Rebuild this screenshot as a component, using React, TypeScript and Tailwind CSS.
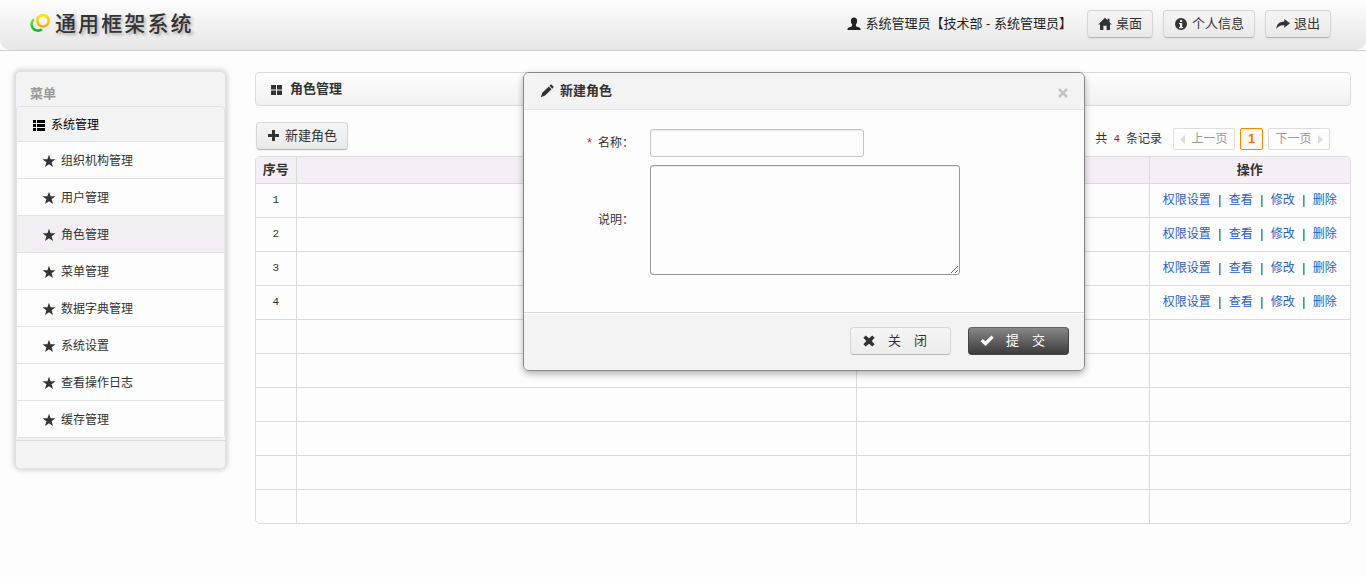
import type { ReactNode } from "react";

const iconShapes = {
  user: <path d="M7 0.5c2 0 3.1 1.3 3.1 3.3 0 1.6-.5 2.9-1.2 3.7v1.1c0 .6.4.9 1 1.1l2.3.9c.9.4 1.3 1 1.4 2.4H.4c.1-1.4.5-2 1.400-2.400l2.300-.9c.6-.2 1-.5 1-1.100V7.500C4.400 6.700 3.900 5.400 3.900 3.800 3.900 1.800 5 .5 7 .5z" />,
  home: <path d="M7 .8 9.500 3.300V1.800h2v3.500L13.800 7.600H12V13H8.600V8.800H5.400V13H2V7.600H.2z" />,
  info: (
    <path
      fillRule="evenodd"
      d="M7 1a6 6 0 1 1 0 12A6 6 0 0 1 7 1zM6 3v2h2.200V3zM5 6v1.200h1V10H5v1.200h4.200V10h-1V6z"
    />
  ),
  share: <path d="M8.300 2 14 6.300 8.300 10.800V8.300C4.500 8 2.300 9.200.3 12c.1-4.300 2.700-7.400 8-7.600z" />,
  list: <path d="M1 2h3v3H1zM5 2h8v3H5zM1 6h3v3H1zM5 6h8v3H5zM1 10h3v3H1zM5 10h8v3H5z" />,
  star: <path d="M7 .8 8.600 5.200 13.500 5.300 9.600 8.200 11 13 7 10.200 3 13 4.400 8.200.5 5.300 5.400 5.200z" />,
  grid: <path d="M1 3h5v4.500H1zM7 3h5v4.500H7zM1 8.500h5V13H1zM7 8.500h5V13H7z" />,
  plus: <path d="M5 1h3v4h4v3H8v4H5V8H1V5h4z" />,
  pencil: <path d="M10.300.9c.5-.4 1-.4 1.500 0l1.500 1.400c.4.5.4 1 0 1.400l-1 1-2.900-2.900zM8.800 2.500l2.800 2.800-6.500 6.200-4.300 1.700 1.500-4.400z" />,
  remove: <path d="M3.700 1.400 7 4.300l3.300-2.900 2.300 2.300L9.700 7l2.900 3.300-2.300 2.300L7 9.700l-3.300 2.900-2.300-2.300L4.300 7 1.400 3.700z" />,
  ok: <path d="M11.500 1.500 13.700 3.700 5.600 11.900.6 7.300 2.700 5.100 5.500 7.300z" />,
};

function Icon({ name }: { name: keyof typeof iconShapes }) {
  return (
    <svg viewBox="0 0 14 14" className="size-3.5 shrink-0 fill-current" aria-hidden="true">
      {iconShapes[name]}
    </svg>
  );
}

function Button({ icon, children }: { icon: keyof typeof iconShapes; children: ReactNode }) {
  return (
    <button
      type="button"
      className="flex h-7 items-center gap-1 rounded-[4px] border border-[#d6d6d6] border-b-[#b5b5b5] bg-linear-to-b from-[#f5f5f5] to-[#e9e9e9] px-2.5 text-[13px] shadow-xs"
    >
      <Icon name={icon} />
      {children}
    </button>
  );
}

const menu = ["组织机构管理", "用户管理", "角色管理", "菜单管理", "数据字典管理", "系统设置", "查看操作日志", "缓存管理"];
const active = "角色管理";
const actions = ["权限设置", "查看", "修改", "删除"];
const rows = [1, 2, 3, 4, null, null, null, null, null, null];

function Header() {
  return (
    <header className="border-b border-[#cfcfcf]">
      <div className="flex h-[50px] items-center justify-between rounded-b-[10px] bg-linear-to-b from-[#fdfdfd] to-[#e6e6e6] pr-[35px] pb-0.5 pl-[29px]">
        <h1 className="flex items-center gap-[5px] text-[21px] leading-7 font-medium tracking-widest text-[#333] [text-shadow:2px_2px_3px_#aaa]">
          <svg viewBox="0 0 21 20" className="h-5 w-[21px]" fill="none" aria-hidden="true">
            <defs>
              <linearGradient id="ring-gold" x1="0" y1="0" x2="0" y2="1">
                <stop stopColor="#ffe800" />
                <stop offset="1" stopColor="#ffa818" />
              </linearGradient>
              <linearGradient id="ring-green" x1="0" y1="0" x2="0" y2="1">
                <stop stopColor="#7ee04a" />
                <stop offset="1" stopColor="#08bd20" />
              </linearGradient>
            </defs>
            <path d="M5 5.200A6 6 0 1 0 12.800 15.300" stroke="url(#ring-green)" strokeWidth="2.600" />
            <circle cx="14" cy="6.800" r="5.700" stroke="url(#ring-gold)" strokeWidth="2.600" />
          </svg>
          通用框架系统
        </h1>
        <div className="flex items-center gap-2.5 text-[13px]">
          <span className="mr-[5px] flex items-center gap-1 text-[#222]">
            <Icon name="user" />
            系统管理员【技术部 - 系统管理员】
          </span>
          <Button icon="home">桌面</Button>
          <Button icon="info">个人信息</Button>
          <Button icon="share">退出</Button>
        </div>
      </div>
    </header>
  );
}

function Sidebar() {
  return (
    <nav className="w-[211px] shrink-0 rounded-[5px] border border-[#e0e0e0] bg-[#f3f3f3] shadow-[0_0_6px_#bbb]">
      <h2 className="h-[34px] pt-3 pl-3.5 text-[13px] leading-5 font-bold text-[#999]">菜单</h2>
      <div className="mb-0.5 rounded-[4px] border border-[#e2e2e2]">
        <div className="flex h-[35px] items-center gap-[5px] border-b border-[#e2e2e2] pt-px pl-[15px] text-black">
          <Icon name="list" />
          系统管理
        </div>
        <ul className="divide-y divide-[#e2e2e2]">
          {menu.map((item) => (
            <li key={item}>
              <a
                href="#"
                aria-current={item === active ? "page" : undefined}
                className={`flex h-9 items-center gap-[5px] pt-px pl-[25px] ${item === active ? "bg-[#f3edf4]" : "bg-[#fdfdfd]"}`}
              >
                <Icon name="star" />
                {item}
              </a>
            </li>
          ))}
        </ul>
      </div>
      <div className="h-7 border-t border-[#d9d9d9]" />
    </nav>
  );
}

function RoleTable() {
  return (
    <div className="mt-1.5 overflow-hidden rounded-[5px] border border-[#dbdbdb]">
      <table className="w-full table-fixed border-collapse text-center">
        <colgroup>
          <col className="w-10" />
          <col />
          <col className="w-[293px]" />
          <col className="w-[201px]" />
        </colgroup>
        <thead>
          <tr className="h-[26px] divide-x divide-[#dbdbdb] bg-[#f5eef6] text-[13px]">
            <th className="p-0">序号</th>
            <th className="p-0" />
            <th className="p-0" />
            <th className="p-0">操作</th>
          </tr>
        </thead>
        <tbody>
          {rows.map((n, i) => (
            <tr key={i} className="h-[34px] divide-x divide-[#dbdbdb] border-t border-[#dbdbdb]">
              <td className="p-0 font-['Liberation_Mono',monospace] text-[11px]">{n}</td>
              <td className="p-0" />
              <td className="p-0" />
              <td className="p-0">
                {n !== null && (
                  <div className="flex justify-center">
                    {actions.map((a, k) => (
                      <span key={a} className="flex">
                        {k > 0 && <span className="w-[18px]">|</span>}
                        <a href="#" className="text-[#2a5fc9]">
                          {a}
                        </a>
                      </span>
                    ))}
                  </div>
                )}
              </td>
            </tr>
          ))}
        </tbody>
      </table>
    </div>
  );
}

function Pagination() {
  return (
    <div className="mr-[21px] flex items-center gap-[5px] pt-1.5">
      <p className="mr-1.5 flex items-center gap-1.5">
        共 <span className="font-['Liberation_Mono',monospace] text-[11px] text-[#e00]">4</span> 条记录
      </p>
      <button type="button" disabled className="flex h-[22px] w-[62px] items-center justify-center gap-1.5 rounded-xs border border-[#ddd] text-[#999]">
        <svg viewBox="0 0 5 9" className="h-[9px] w-[5px] fill-[#ddd]" aria-hidden="true">
          <path d="M5 0v9L0 4.500z" />
        </svg>
        上一页
      </button>
      <button type="button" aria-current="page" className="h-[22px] w-[23px] rounded-xs border border-[#ff8500] bg-[#fff8ee] text-[13px] font-bold text-[#ff6d10]">
        1
      </button>
      <button type="button" disabled className="flex h-[22px] w-[62px] items-center justify-center gap-1.5 rounded-xs border border-[#ddd] text-[#999]">
        下一页
        <svg viewBox="0 0 5 9" className="h-[9px] w-[5px] fill-[#ddd]" aria-hidden="true">
          <path d="M0 0v9l5-4.500z" />
        </svg>
      </button>
    </div>
  );
}

function RoleDialog() {
  return (
    <div
      role="dialog"
      aria-labelledby="dialog-title"
      className="absolute top-0 right-0 left-0.5 mx-auto w-[562px] rounded-[6px] border border-[#888] bg-[#fdfdfd] shadow-[0_3px_7px_rgba(0,0,0,0.3)]"
    >
      <div className="flex h-[37px] items-center justify-between rounded-t-[5px] border-b border-[#e6e6e6] bg-[#f3f3f3] px-4">
        <h2 id="dialog-title" className="flex items-center gap-1.5 text-[13px] font-bold">
          <Icon name="pencil" />
          新建角色
        </h2>
        <button type="button" aria-label="关闭" className="text-[#c4c4c4]">
          <svg viewBox="0 0 10 10" className="mt-1 size-2.5 stroke-current stroke-[2.500]" aria-hidden="true">
            <path d="M1 1l8 8M9 1 1 9" />
          </svg>
        </button>
      </div>
      <form>
        <div className="grid grid-cols-[110px_1fr] items-center gap-x-4 gap-y-2 pt-[19px] pb-[37px]">
          <label htmlFor="role-name" className="flex justify-end gap-1.5">
            <span className="text-[#f00]">*</span>名称：
          </label>
          <input id="role-name" type="text" className="h-7 w-[214px] rounded-[3px] border border-[#c4c4c4] bg-[#fdfdfd] px-1.5 shadow-[inset_0_1px_1px_rgba(0,0,0,0.075)]" />
          <label htmlFor="role-note" className="text-right">
            说明：
          </label>
          <textarea id="role-note" className="block h-[110px] w-[310px] rounded-[3px] border border-[#999] bg-[#fdfdfd] p-1.5 shadow-[inset_0_1px_1px_rgba(0,0,0,0.075)]" />
        </div>
        <div className="flex justify-end gap-[17px] rounded-b-[5px] border-t border-[#d9d9d9] bg-[#f3f3f3] px-[15px] pt-3.5 pb-[15px] text-[13px] shadow-[inset_0_1px_0_#fff]">
          <button type="button" className="flex h-7 w-[101px] items-center gap-3 rounded-[4px] border border-[#d6d6d6] border-b-[#b5b5b5] bg-linear-to-b from-[#f5f5f5] to-[#ececec] pl-[11px]">
            <Icon name="remove" />
            关　闭
          </button>
          <button type="submit" className="flex h-7 w-[101px] items-center gap-3 rounded-[4px] border border-[#444] border-t-[#666] bg-linear-to-b from-[#888] to-[#3c3c3c] pl-[11px] text-white">
            <Icon name="ok" />
            提　交
          </button>
        </div>
      </form>
    </div>
  );
}

export default function App() {
  return (
    <div className="min-h-screen bg-[#fdfdfd] font-['Liberation_Sans','Noto_Sans_CJK_SC',sans-serif] text-xs text-[#333]">
      <Header />
      <div className="flex items-start gap-[29px] px-[15px] pt-5">
        <Sidebar />
        <main className="relative mt-px min-w-0 flex-1">
          <h2 className="flex h-[34px] items-center gap-1.5 rounded-[4px] border border-[#dbdbdb] bg-linear-to-b from-[#fefefe] to-[#f1f1f1] pl-3.5 text-[13px] font-bold">
            <Icon name="grid" />
            角色管理
          </h2>
          <div className="mt-4 flex items-center justify-between pl-px">
            <Button icon="plus">新建角色</Button>
            <Pagination />
          </div>
          <RoleTable />
          <RoleDialog />
        </main>
      </div>
    </div>
  );
}
